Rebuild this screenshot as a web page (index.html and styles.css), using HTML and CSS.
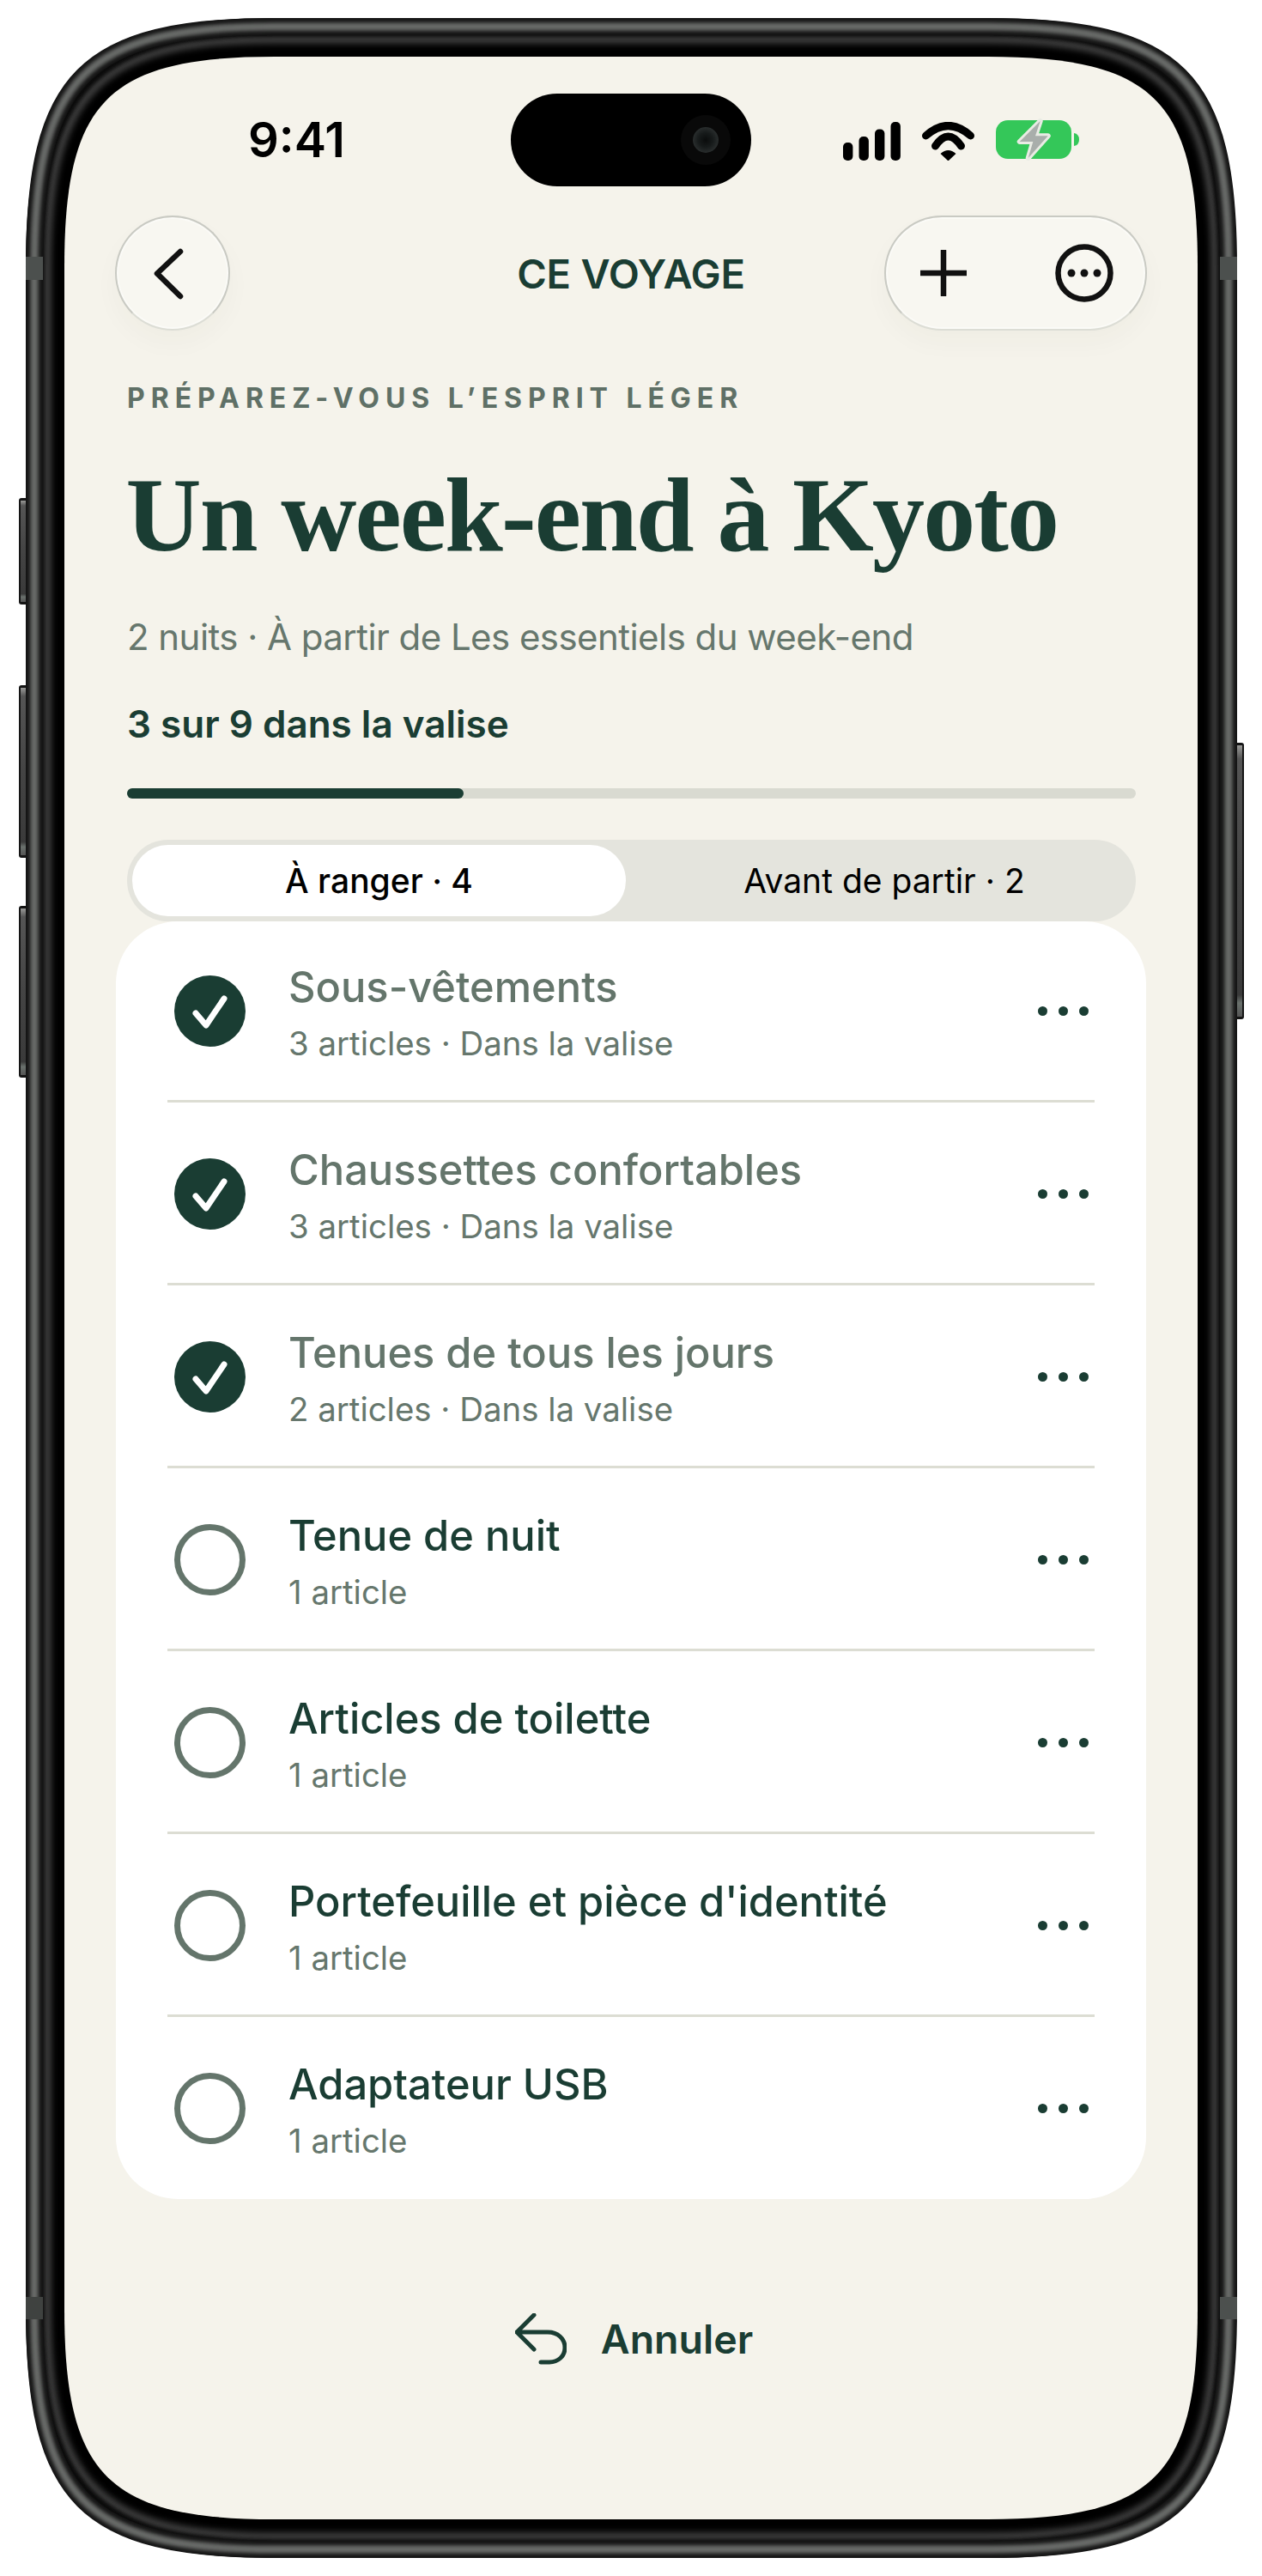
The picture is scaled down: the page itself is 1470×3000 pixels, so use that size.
FILE: index.html
```html
<!DOCTYPE html>
<html lang="fr">
<head>
<meta charset="utf-8">
<title>Ce voyage</title>
<link rel="stylesheet" href="styles.css">
</head>
<body>
<div class="stage">
  <svg class="frame" width="1470" height="3000" viewBox="0 0 1470 3000" aria-hidden="true">
    <defs>
      <filter id="soft" x="-5%" y="-5%" width="110%" height="110%"><feGaussianBlur stdDeviation="2.2"/></filter>
      <filter id="softer" x="-5%" y="-5%" width="110%" height="110%"><feGaussianBlur stdDeviation="3.5"/></filter>
      <path id="edge-screen" d="M290 45H1120C1314 45 1365 96 1365 290V2668C1365 2862 1314 2913 1120 2913H290C96 2913 45 2862 45 2668V290C45 96 96 45 290 45Z"/>
      <path id="edge-band" d="M290 10H1121C1342 10 1401 69 1401 290V2668C1401 2889 1342 2948 1121 2948H290C69 2948 10 2889 10 2668V290C10 69 69 10 290 10Z"/>
      <linearGradient id="btn" x1="0" x2="0" y1="0" y2="1">
        <stop offset="0" stop-color="#9a9a98"/><stop offset=".05" stop-color="#555"/><stop offset=".5" stop-color="#444"/><stop offset=".92" stop-color="#3a3a3a"/><stop offset=".95" stop-color="#6a716d"/><stop offset="1" stop-color="#555"/>
      </linearGradient>
    </defs>
    <g class="side-buttons">
      <rect x="22" y="580" width="14" height="124" rx="3" fill="#141414"/>
      <rect x="24" y="583" width="6" height="118" fill="url(#btn)"/>
      <rect x="22" y="798" width="14" height="201" rx="3" fill="#141414"/>
      <rect x="24" y="801" width="6" height="195" fill="url(#btn)"/>
      <rect x="22" y="1055" width="14" height="200" rx="3" fill="#141414"/>
      <rect x="24" y="1058" width="6" height="194" fill="url(#btn)"/>
      <rect x="1435" y="865" width="14" height="322" rx="3" fill="#141414"/>
      <rect x="1441" y="868" width="6" height="316" fill="url(#btn)"/>
    </g>
    <g transform="translate(30 21)">
      <use href="#edge-screen" fill="none" stroke="#0b0b0b" stroke-width="90"/>
      <use href="#edge-screen" fill="none" stroke="#3a3a3a" stroke-width="46" filter="url(#soft)"/>
      <use href="#edge-screen" fill="none" stroke="#000" stroke-width="30" filter="url(#softer)"/>
      <use href="#edge-screen" fill="#f5f3eb"/>
      <use href="#edge-band" fill="none" stroke="#141414" stroke-width="20"/>
      <use href="#edge-band" fill="none" stroke="#565856" stroke-width="10" filter="url(#soft)"/>
      <use href="#edge-band" fill="none" stroke="#7b7e7c" stroke-width="2.5" filter="url(#soft)"/>
      <rect x="0" y="278" width="20" height="27" fill="#4c504e"/>
      <rect x="1391" y="278" width="20" height="27" fill="#4c504e"/>
      <rect x="0" y="2654" width="20" height="26" fill="#3f4240"/>
      <rect x="1391" y="2654" width="20" height="26" fill="#4c504e"/>
    </g>
  </svg>

  <main class="screen">
    <div class="island"><span class="camera"></span></div>

    <header class="status">
      <span class="time">9:41</span>
      <div class="status-icons">
        <svg width="67" height="45" viewBox="0 0 67 45" class="ico-signal">
          <rect x="0" y="24" width="11.4" height="21" rx="5"/>
          <rect x="18.5" y="17" width="11.4" height="28" rx="5"/>
          <rect x="37" y="8.500" width="11.4" height="36.500" rx="5"/>
          <rect x="55.500" y="0" width="11.4" height="45" rx="5"/>
        </svg>
        <svg width="61" height="45" viewBox="0 0 61 45" class="ico-wifi">
          <path class="wifi-arc" d="M4.500 16Q30.500-7 56.500 16"/>
          <path class="wifi-arc" d="M15.500 28Q30.500 6 45.500 28"/>
          <path class="wifi-dot" d="M21.500 37Q30.500 29 39.500 37L31.500 44.500Q30.500 45.500 29.500 44.500Z"/>
        </svg>
        <svg width="97" height="50" viewBox="0 0 97 50" class="ico-battery">
          <rect class="bat-body" x="0" y="2" width="88" height="45" rx="14"/>
          <path class="bat-body" d="M91 17Q97 18 97 24.500Q97 31 91 32Z"/>
          <path class="bat-bolt" d="M51.700 3L27.700 27H43.300L37.700 46L60.700 20.300H46Z"/>
        </svg>
      </div>
    </header>

    <nav class="topbar">
      <button class="glass glass-round" type="button" aria-label="Retour">
        <svg width="134" height="134" viewBox="0 0 134 134" class="ico-line"><path d="M76 42L49 67.500L76 94"/></svg>
      </button>
      <h2 class="topbar-title">CE VOYAGE</h2>
      <div class="glass glass-pill">
        <svg width="54" height="54" viewBox="0 0 54 54" class="ico-line"><path d="M27 1V53M1 27H53"/></svg>
        <svg width="68" height="68" viewBox="0 0 68 68" class="ico-line"><circle cx="34" cy="34" r="30.500"/><circle class="ico-dot" cx="19" cy="34" r="4.500"/><circle class="ico-dot" cx="34" cy="34" r="4.500"/><circle class="ico-dot" cx="49" cy="34" r="4.500"/></svg>
      </div>
    </nav>

    <section class="intro">
      <p class="eyebrow">PRÉPAREZ-VOUS L’ESPRIT LÉGER</p>
      <h1 class="title">Un week-end à Kyoto</h1>
      <p class="subtitle">2 nuits · À partir de Les essentiels du week-end</p>
      <p class="progress-label">3 sur 9 dans la valise</p>
      <div class="progress"><div class="progress-fill" style="width:33.4%"></div></div>
      <div class="segments">
        <span class="segment segment-on">À ranger · 4</span>
        <span class="segment segment-off">Avant de partir · 2</span>
      </div>
    </section>

    <section class="card">
      <article class="row row-done">
        <svg class="check" width="83" height="83" viewBox="0 0 83 83"><circle cx="41.500" cy="41.500" r="41.500"/><path d="M25 44L37 58L58 27"/></svg>
        <div class="row-text"><h3 class="row-name">Sous-vêtements</h3><p class="row-sub">3 articles · Dans la valise</p></div>
        <span class="more"><i></i><i></i><i></i></span>
      </article>
      <article class="row row-done">
        <svg class="check" width="83" height="83" viewBox="0 0 83 83"><circle cx="41.500" cy="41.500" r="41.500"/><path d="M25 44L37 58L58 27"/></svg>
        <div class="row-text"><h3 class="row-name">Chaussettes confortables</h3><p class="row-sub">3 articles · Dans la valise</p></div>
        <span class="more"><i></i><i></i><i></i></span>
      </article>
      <article class="row row-done">
        <svg class="check" width="83" height="83" viewBox="0 0 83 83"><circle cx="41.500" cy="41.500" r="41.500"/><path d="M25 44L37 58L58 27"/></svg>
        <div class="row-text"><h3 class="row-name">Tenues de tous les jours</h3><p class="row-sub">2 articles · Dans la valise</p></div>
        <span class="more"><i></i><i></i><i></i></span>
      </article>
      <article class="row">
        <span class="radio"></span>
        <div class="row-text"><h3 class="row-name">Tenue de nuit</h3><p class="row-sub">1 article</p></div>
        <span class="more"><i></i><i></i><i></i></span>
      </article>
      <article class="row">
        <span class="radio"></span>
        <div class="row-text"><h3 class="row-name">Articles de toilette</h3><p class="row-sub">1 article</p></div>
        <span class="more"><i></i><i></i><i></i></span>
      </article>
      <article class="row">
        <span class="radio"></span>
        <div class="row-text"><h3 class="row-name">Portefeuille et pièce d'identité</h3><p class="row-sub">1 article</p></div>
        <span class="more"><i></i><i></i><i></i></span>
      </article>
      <article class="row">
        <span class="radio"></span>
        <div class="row-text"><h3 class="row-name">Adaptateur USB</h3><p class="row-sub">1 article</p></div>
        <span class="more"><i></i><i></i><i></i></span>
      </article>
    </section>

    <footer class="undo">
      <svg width="60" height="60" viewBox="0 0 60 60" class="ico-undo"><path d="M22 2L2 22L22 42M2 22H38C50 22 58 30 58 40C58 50 50 57 40 57H30"/></svg>
      <span class="undo-label">Annuler</span>
    </footer>
  </main>
</div>
</body>
</html>
```
FILE: styles.css
```css
* { box-sizing: border-box; }

html, body {
  margin: 0;
  padding: 0;
  background: #fff;
}

body {
  font-family: "Inter", "Liberation Sans", sans-serif;
  color: #1a3d33;
}

h1, h2, h3, p { margin: 0; }

.stage {
  position: relative;
  width: 1470px;
  height: 3000px;
  padding: 66px 75px;
  overflow: hidden;
}

.frame {
  position: absolute;
  left: 0;
  top: 0;
}

.screen {
  position: relative;
  width: 1320px;
  height: 2868px;
}

/* Dynamic island */
.island {
  position: absolute;
  left: 520px;
  top: 43px;
  width: 280px;
  height: 108px;
  border-radius: 54px;
  background: #000;
}

.camera {
  position: absolute;
  left: 212px;
  top: 39px;
  width: 30px;
  height: 30px;
  border-radius: 50%;
  background: radial-gradient(circle at 50% 50%, #0a0c0c 0, #171b1b 40%, #2c3030 75%, #111 100%);
  box-shadow: 0 0 0 14px #090909;
}

/* Status bar */
.status {
  display: flex;
  justify-content: space-between;
  align-items: flex-start;
  height: 185px;
  padding: 65px 138px 0 214px;
}

.time {
  font-size: 56px;
  line-height: 64px;
  font-weight: 600;
  color: #000;
}

.status-icons {
  display: flex;
  align-items: flex-start;
  gap: 25px;
  margin-top: 7px;
}

.ico-signal { margin-top: 4px; fill: #000; }
.ico-wifi { margin-top: 4px; }
.wifi-arc { fill: none; stroke: #000; stroke-width: 9; stroke-linecap: round; }
.wifi-dot { fill: #000; }
.bat-body { fill: #34c759; }
.bat-bolt {
  fill: #a9aeab;
  stroke: #e9ebe4;
  stroke-width: 6;
  stroke-linejoin: round;
  paint-order: stroke;
}

/* Top bar */
.topbar {
  display: grid;
  grid-template-columns: 306px 1fr 306px;
  align-items: center;
  height: 134px;
  padding: 0 59px;
}

.glass {
  background: #f8f7f1;
  border: 2px solid #c9cac3;
  border-bottom-color: #dcddd5;
  box-shadow: inset 0 0 0 2px rgba(255, 255, 255, .45), 0 14px 30px rgba(60, 60, 40, .03);
}

.glass-round {
  display: flex;
  align-items: center;
  justify-content: center;
  width: 134px;
  height: 134px;
  padding: 0;
  border-radius: 50%;
}

.glass-pill {
  display: flex;
  align-items: center;
  justify-content: space-between;
  height: 134px;
  padding: 0 37px 0 40px;
  border-radius: 67px;
}

.topbar-title {
  padding-top: 2px;
  text-align: center;
  font-size: 47px;
  line-height: 60px;
  font-weight: 600;
  letter-spacing: -.2px;
  color: #1a3d33;
}

.ico-line { flex: none; fill: none; stroke: #111; stroke-width: 6.500; stroke-linecap: round; stroke-linejoin: round; }
.ico-dot { fill: #111; stroke: none; }

/* Intro */
.intro {
  padding: 59px 72px 0 73px;
}

.eyebrow {
  font-size: 32px;
  line-height: 40px;
  font-weight: 700;
  letter-spacing: 6.950px;
  color: #5f7066;
  white-space: nowrap;
}

.title {
  margin: 51px 0 0 -1.5px;
  font-family: "Liberation Serif", serif;
  font-size: 122px;
  line-height: 130px;
  font-weight: 700;
  letter-spacing: -1.900px;
  color: #1a3d33;
  white-space: nowrap;
}

.subtitle {
  margin-top: 52px;
  font-size: 42px;
  line-height: 50px;
  letter-spacing: -.55px;
  color: #66776d;
}

.progress-label {
  margin-top: 51px;
  font-size: 44px;
  line-height: 50px;
  font-weight: 600;
  color: #1a3d33;
}

.progress {
  height: 12px;
  margin-top: 50px;
  border-radius: 6px;
  background: #d9dad1;
}

.progress-fill {
  height: 100%;
  border-radius: 6px;
  background: #1a3d33;
}

.segments {
  display: grid;
  grid-template-columns: 575px 1fr;
  height: 95px;
  margin-top: 48px;
  padding: 6px;
  border-radius: 48px;
  background: #e4e4dd;
}

.segment {
  display: flex;
  align-items: center;
  justify-content: center;
  font-size: 39px;
  font-weight: 500;
  color: #000;
  border-radius: 42px;
}

.segment-on {
  background: #fff;
}

.segment-off {
  padding-left: 14px;
  font-weight: 400;
}

/* Card */
.card {
  margin: 0 60px;
  padding: 0 60px;
  border-radius: 72px;
  background: #fff;
}

.row {
  display: flex;
  align-items: center;
  height: 213px;
  padding: 2px 7px 0 8px;
  border-bottom: 3px solid #dcddd3;
}

.row:first-child {
  height: 211px;
  padding-top: 0;
}

.row:last-child {
  height: 212px;
  border-bottom: 0;
  padding-top: 0;
}

.check { flex: none; }
.check circle { fill: #1a3d33; }
.check path { fill: none; stroke: #fff; stroke-width: 7; stroke-linecap: round; stroke-linejoin: round; }

.radio {
  flex: none;
  width: 83px;
  height: 83px;
  border: 7px solid #64756b;
  border-radius: 50%;
}

.row-text {
  flex: 1;
  margin: 4px 0 0 50px;
}

.row-name {
  font-size: 48.800px;
  line-height: 60px;
  font-weight: 500;
  color: #1a3d33;
}

.row-done .row-name {
  color: #64756b;
}

.row-sub {
  margin-top: 12px;
  font-size: 38.400px;
  line-height: 46px;
  color: #66776d;
}

.more {
  display: flex;
  gap: 13px;
}

.more i {
  display: block;
  width: 11px;
  height: 11px;
  border-radius: 50%;
  background: #1a3d33;
}

/* Undo */
.undo {
  display: flex;
  align-items: center;
  justify-content: center;
  gap: 40px;
  height: 80px;
  margin-top: 123px;
  padding-left: 7px;
}

.ico-undo { fill: none; stroke: #1a3d33; stroke-width: 5; stroke-linecap: round; stroke-linejoin: round; }

.undo-label {
  font-size: 46.500px;
  font-weight: 600;
  color: #1a3d33;
}
```
